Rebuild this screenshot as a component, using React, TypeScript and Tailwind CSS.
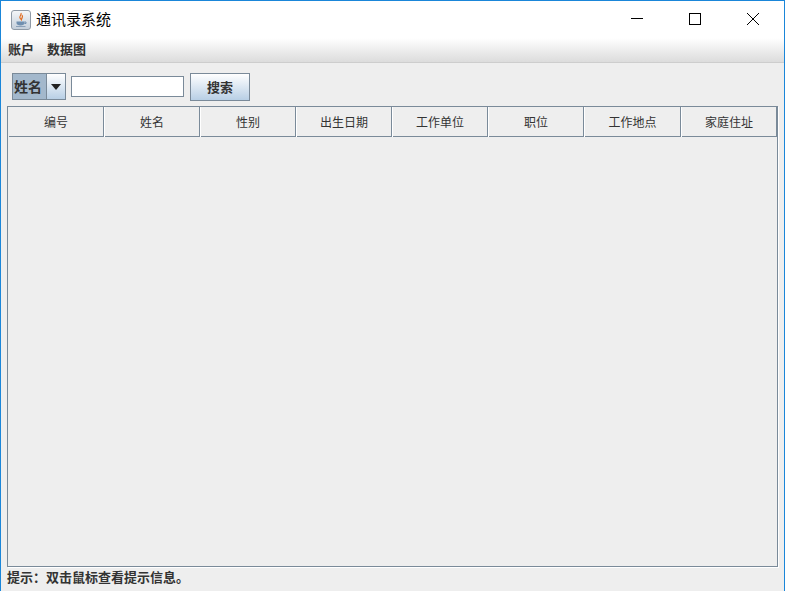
const columns = ["编号", "姓名", "性别", "出生日期", "工作单位", "职位", "工作地点", "家庭住址"];

const cjk = "font-['SimSun','Noto_Sans_CJK_SC',sans-serif]";

function JavaIcon() {
  return (
    <div className="w-[20px] h-[20px] rounded-[3px] border border-[#8f9aa6] bg-gradient-to-b from-[#f4f6f8] to-[#c4cfdb] flex items-center justify-center">
      <svg width="14" height="16" viewBox="0 0 14 16">
        <path d="M7 1c1 2-2 3-1 5 .4.8 1 1 1.400 1.600C7.600 6 9.500 5 8 3" fill="none" stroke="#e06b1f" strokeWidth="1.200" />
        <path d="M2.500 9.500h8v1.500c0 1.500-1.500 2.500-4 2.500s-4-1-4-2.500z" fill="#6f8fb0" />
        <path d="M10.500 10h1.500v1.500h-1.500" fill="none" stroke="#6f8fb0" />
        <path d="M2 14.500h9.500" stroke="#8aa0b8" strokeWidth="1" />
      </svg>
    </div>
  );
}

function TitleBar() {
  return (
    <div className="h-[37px] flex items-center justify-between bg-white">
      <div className="flex items-center pl-[10px] gap-[5px]">
        <JavaIcon />
        <span className={`text-[15px] text-black ${cjk}`}>通讯录系统</span>
      </div>
      <div className="flex items-center h-full pr-[2px] pb-[2px]">
        <div className="w-[58px] flex justify-center">
          <svg width="12" height="12" viewBox="0 0 12 12"><path d="M0 5.500h12" stroke="#000" strokeWidth="1" /></svg>
        </div>
        <div className="w-[58px] flex justify-center">
          <svg width="12" height="12" viewBox="0 0 12 12"><rect x=".5" y=".5" width="11" height="11" fill="none" stroke="#000" /></svg>
        </div>
        <div className="w-[58px] flex justify-center">
          <svg width="12" height="12" viewBox="0 0 12 12"><path d="M0 0l12 12M12 0L0 12" stroke="#000" strokeWidth="1" /></svg>
        </div>
      </div>
    </div>
  );
}

function MenuBar() {
  return (
    <div className={`h-[25px] flex items-center gap-[13px] pl-[7px] pb-[3px] bg-gradient-to-b from-white to-[#dcdcdc] border-b border-[#cdcdcd] text-[13px] font-bold text-[#333333] ${cjk}`}>
      <span>账户</span>
      <span>数据图</span>
    </div>
  );
}

function SearchBar() {
  return (
    <div className="h-[43px] flex items-start pl-[11px] pt-[10px]">
      <div className="w-[54px] h-[27px] border border-[#7a8a99] flex bg-white">
        <div className={`w-[34px] bg-[#a3b8cc] border-r border-[#7a8a99] flex items-center pl-[1px] text-[14px] font-bold text-[#333333] ${cjk}`}>
          姓名
        </div>
        <div className="flex-1 bg-gradient-to-b from-white to-[#b8cfe5] flex items-center justify-center">
          <div className="w-0 h-0 border-x-[5px] border-x-transparent border-t-[6px] border-t-[#222222]" />
        </div>
      </div>
      <input className="ml-[5px] mt-[3px] w-[113px] h-[21px] border border-[#7a8a99] bg-white outline-none" />
      <button className={`ml-[6px] w-[60px] h-[28px] border border-[#7a8a99] bg-gradient-to-b from-white to-[#b8cfe5] text-[13px] font-bold text-[#333333] ${cjk}`}>
        搜索
      </button>
    </div>
  );
}

function ContactsTable() {
  return (
    <div className="mx-[6px] h-[461px] border-x border-b border-[#7a8a99] shadow-[1px_1px_0_#ffffff] flex flex-col">
      <div className="-mx-px h-[31px] grid grid-cols-[97px_repeat(5,96px)_97px_97px] border-t border-[#7a8a99]">
        {columns.map((name, i) => (
          <div
            key={name}
            className={`flex flex-col border-[#7a8a99] ${i === 0 ? "border-l" : "border-l border-l-white"} ${i === columns.length - 1 ? "border-r-2" : "border-r"}`}
          >
            <div className={`flex-1 flex items-center justify-center border-b border-[#7a8a99] text-[12px] text-[#333333] ${i === 0 ? "ml-[1px]" : ""} ${cjk}`}>
              {name}
            </div>
          </div>
        ))}
      </div>
      <div className="flex-1 bg-[#eeeeee]" />
    </div>
  );
}

export default function App() {
  return (
    <div className="w-[785px] h-[591px] bg-[#eeeeee] border-x border-t border-[#1a86d9] overflow-hidden font-['Liberation_Sans',sans-serif]">
      <TitleBar />
      <MenuBar />
      <SearchBar />
      <ContactsTable />
      <div className={`pl-[6px] pt-[1px] text-[13px] font-bold leading-[17px] text-[#333333] ${cjk}`}>
        提示：双击鼠标查看提示信息。
      </div>
    </div>
  );
}
